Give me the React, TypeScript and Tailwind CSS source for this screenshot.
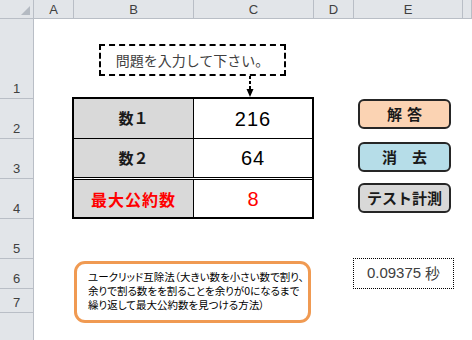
import React from "react";

const jp = "font-['Noto_Sans_CJK_JP','Noto_Sans',sans-serif]";
const hdr = "bg-[#e2e5e9] border-r border-b border-[#b9bec6] text-[#404040] text-[13px] font-['Liberation_Sans',sans-serif]";

export default function App() {
  const cols = ["A", "B", "C", "D", "E", "F"];
  const rows = [
    { n: "1", h: "row-start-2" },
    { n: "2", h: "row-start-3" },
    { n: "3", h: "row-start-4" },
    { n: "4", h: "row-start-5" },
    { n: "5", h: "row-start-6" },
    { n: "6", h: "row-start-7" },
    { n: "7", h: "row-start-8" },
    { n: "", h: "row-start-9" },
  ];
  return (
    <div className="relative w-[472px] h-[340px] overflow-hidden bg-white">
      <div className="grid grid-cols-[34px_40px_120px_120px_40px_109px_1fr] grid-rows-[19px_80px_40px_40px_40px_40px_30px_24px_50px] w-[472px]">
        {/* corner */}
        <div className={`${hdr} col-start-1 row-start-1 flex items-end justify-end pr-[3px] pb-[3px]`}>
          <svg width="9" height="9" viewBox="0 0 9 9">
            <polygon points="9,0 9,9 0,9" fill="#b4bac2" />
          </svg>
        </div>
        {cols.map((c, i) => (
          <div
            key={c}
            className={`${hdr} row-start-1 flex items-center justify-center leading-none pt-[1px] ${
              ["col-start-2", "col-start-3", "col-start-4", "col-start-5", "col-start-6", "col-start-7"][i]
            }`}
          >
            {c === "F" ? "" : c}
          </div>
        ))}
        {rows.map((r, i) => (
          <div key={i} className={`${hdr} col-start-1 ${r.h} flex items-end justify-center pb-[3px] leading-none`}>
            {r.n}
          </div>
        ))}

        {/* table B2:C4 */}
        <div className="col-start-3 col-span-2 row-start-3 row-span-3 -ml-[2px] -mt-[2px] border-2 border-black flex flex-col">
          <div className="flex h-[40px] border-b border-black">
            <div className={`w-[120px] bg-[#d9d9d9] border-r border-black flex items-center justify-center font-bold text-[15px] text-[#1a1a1a] ${jp}`}>
              数１
            </div>
            <div className="flex-1 flex items-center justify-center text-[20px] tracking-[1px] text-black font-['Liberation_Sans',sans-serif]">
              216
            </div>
          </div>
          <div className="flex h-[41px] border-b-[3px] border-double border-black">
            <div className={`w-[120px] bg-[#d9d9d9] border-r border-black flex items-center justify-center font-bold text-[15px] text-[#1a1a1a] ${jp}`}>
              数２
            </div>
            <div className="flex-1 flex items-center justify-center text-[20px] tracking-[1px] text-black font-['Liberation_Sans',sans-serif]">
              64
            </div>
          </div>
          <div className="flex flex-1">
            <div className={`w-[120px] bg-[#d9d9d9] border-r border-black flex items-center justify-center font-bold text-[16px] tracking-[1px] text-[#ff0000] ${jp}`}>
              最大公約数
            </div>
            <div className="flex-1 flex items-center justify-center text-[20px] text-[#ff0000] font-['Liberation_Sans',sans-serif]">
              8
            </div>
          </div>
        </div>
      </div>

      {/* dashed callout */}
      <div className={`absolute left-[99px] top-[44px] w-[187px] h-[32px] border-2 border-dashed border-black bg-white flex items-center justify-center text-[14px] text-[#404040] ${jp}`}>
        問題を入力して下さい。
      </div>
      <svg className="absolute left-[244px] top-[76px]" width="12" height="22" viewBox="0 0 12 22">
        <line x1="6" y1="0" x2="6" y2="14" stroke="black" strokeWidth="2" strokeDasharray="3 2" />
        <polygon points="2.5,13 9.5,13 6,21" fill="black" />
      </svg>

      {/* buttons */}
      <div className={`absolute left-[358px] top-[99px] w-[93px] h-[30px] rounded-[6px] border-2 border-[#262626] bg-[#fbd3b3] flex items-center justify-center pl-[5px] font-bold text-[15px] tracking-[5px] text-[#1a1a1a] ${jp}`}>
        解答
      </div>
      <div className={`absolute left-[358px] top-[142px] w-[93px] h-[30px] rounded-[6px] border-2 border-[#262626] bg-[#b6dde8] flex items-center justify-center font-bold text-[15px] text-[#1a1a1a] ${jp}`}>
        消　去
      </div>
      <div className={`absolute left-[358px] top-[183px] w-[93px] h-[30px] rounded-[6px] border-2 border-[#262626] bg-[#d8d8d8] flex items-center justify-center font-bold text-[15px] text-[#1a1a1a] ${jp}`}>
        テスト計測
      </div>

      {/* timer */}
      <div className="absolute left-[353px] top-[258px] w-[101px] h-[31px] border border-dotted border-black bg-white flex items-center justify-center text-[15px] text-[#404040] font-['Liberation_Sans',sans-serif]">
        0.09375 <span className={`ml-[4px] ${jp}`}>秒</span>
      </div>

      {/* explanation */}
      <div className={`absolute left-[74px] top-[261px] w-[237px] h-[62px] rounded-[11px] border-[3px] border-[#f09a52] bg-white pl-[11px] pt-[6px] text-[10.5px] leading-[14px] text-black whitespace-nowrap [font-feature-settings:'palt'] ${jp}`}>
        <div>ユークリッド互除法（大きい数を小さい数で割り、</div>
        <div>余りで割る数をを割ることを余りが0になるまで</div>
        <div>繰り返して最大公約数を見つける方法）</div>
      </div>
    </div>
  );
}
